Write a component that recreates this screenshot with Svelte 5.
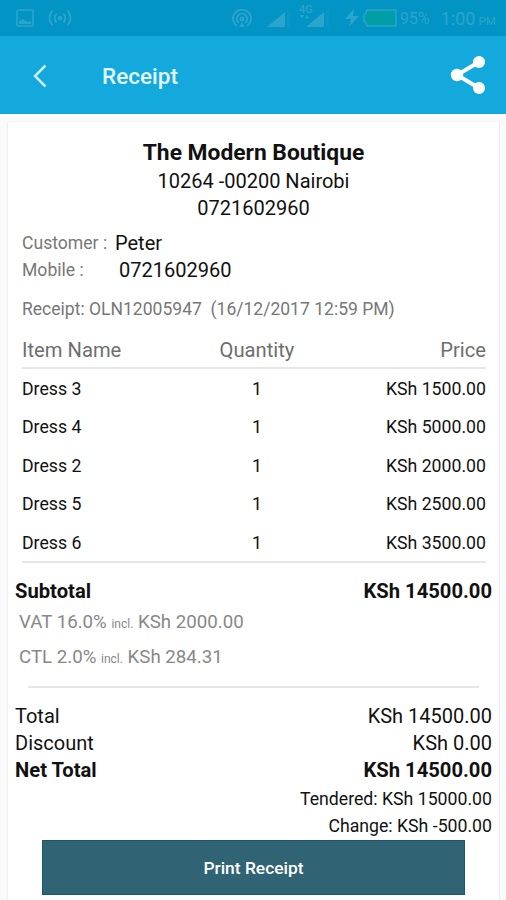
<script>
  const shop = {
    name: 'The Modern Boutique',
    address: '10264 -00200 Nairobi',
    phone: '0721602960'
  };

  const customer = { name: 'Peter', mobile: '0721602960' };

  const items = [
    { name: 'Dress 3', quantity: 1, price: 1500 },
    { name: 'Dress 4', quantity: 1, price: 5000 },
    { name: 'Dress 2', quantity: 1, price: 2000 },
    { name: 'Dress 5', quantity: 1, price: 2500 },
    { name: 'Dress 6', quantity: 1, price: 3500 }
  ];

  const taxes = [
    { label: 'VAT 16.0%', amount: 2000 },
    { label: 'CTL 2.0%', amount: 284.31 }
  ];

  const discount = 0;
  const tendered = 15000;
  const change = -500;
  const total = items.reduce((sum, item) => sum + item.quantity * item.price, 0);

  const money = (value) => `KSh ${value.toFixed(2)}`;
</script>

<div class="screen">
  <div class="status">
    <svg class="picture" width="18" height="18" viewBox="0 0 18 18">
      <rect x="1" y="1" width="16" height="16" rx="1" fill="none" stroke="currentColor" stroke-width="1.6" />
      <path d="M3 15v-3l4-2 4 3 4-1v3z" fill="currentColor" />
    </svg>
    <svg class="hotspot" width="24" height="18" viewBox="0 0 24 18" fill="none" stroke="currentColor" stroke-width="1.9">
      <circle cx="12" cy="9" r="2.2" fill="currentColor" stroke="none" />
      <path d="M8.500 4.500q-3.500 4.500 0 9M15.500 4.500q3.500 4.500 0 9M4.500 1.500q-6 7.500 0 15M19.500 1.500q6 7.500 0 15" />
    </svg>
    <svg class="cast" width="20" height="19" viewBox="0 0 20 19" fill="none" stroke="currentColor" stroke-width="1.800">
      <path d="M5 17a9 9 0 1 1 10 0M7 14a5.200 5.200 0 1 1 6 0" />
      <circle cx="10" cy="10" r="1.500" />
      <path d="M7.500 18l2.500-5 2.500 5z" fill="currentColor" stroke="none" />
    </svg>
    <svg class="signal" width="24" height="17" viewBox="0 0 24 17">
      <path d="M0 17L18 2v15z" fill="currentColor" />
      <path d="M20 0h3v17h-3z" fill="currentColor" opacity=".2" />
    </svg>
    <div class="mobile-data">
      <span class="network">4G</span>
      <svg width="32" height="17" viewBox="0 0 32 17">
        <path d="M1 5h4l-2 3.500zM6 8.500h4L8 5zM7 17L25 2v15z" fill="currentColor" />
        <path d="M27 0h3v17h-3z" fill="currentColor" opacity=".2" />
      </svg>
    </div>
    <svg class="bolt" width="14" height="18" viewBox="0 0 14 18">
      <path d="M9 0L0 10h6l-2 8L14 7H8z" fill="currentColor" />
    </svg>
    <svg class="battery" width="34" height="18" viewBox="0 0 34 18">
      <path d="M4 1h29v16H4l-1.500-4-1.500-1V6l1.500-1z" fill="#009fa8" stroke="currentColor" stroke-width="1.500" />
    </svg>
    <span class="percent">95%</span>
    <span class="clock">1:00<small>PM</small></span>
  </div>

  <header>
    <svg class="back" width="14" height="24" viewBox="0 0 14 24">
      <path d="M12.500 1.500L2 12l10.500 10.500" fill="none" stroke="currentColor" stroke-width="2.500" />
    </svg>
    <h1>Receipt</h1>
    <svg class="share" width="36" height="40" viewBox="0 0 36 40">
      <path d="M29 7L7 20l22 13" fill="none" stroke="currentColor" stroke-width="4" />
      <g fill="currentColor">
        <circle cx="29" cy="7" r="6" />
        <circle cx="7" cy="20" r="6.200" />
        <circle cx="29" cy="33" r="6" />
      </g>
    </svg>
  </header>

  <main>
    <div class="shop">
      <h2>{shop.name}</h2>
      <p>{shop.address}</p>
      <p>{shop.phone}</p>
    </div>

    <div class="customer">
      <p><span class="label">Customer :</span><span>{customer.name}</span></p>
      <p><span class="label mobile">Mobile :</span><span>{customer.mobile}</span></p>
    </div>

    <p class="number">Receipt: OLN12005947 &nbsp;(16/12/2017 12:59 PM)</p>

    <div class="items">
      <div class="row head">
        <span>Item Name</span>
        <span>Quantity</span>
        <span>Price</span>
      </div>
      {#each items as item}
        <div class="row">
          <span>{item.name}</span>
          <span>{item.quantity}</span>
          <span>{money(item.price)}</span>
        </div>
      {/each}
    </div>

    <div class="line bold subtotal">
      <span>Subtotal</span>
      <span>{money(total)}</span>
    </div>

    <div class="taxes">
      {#each taxes as tax}
        <p>{tax.label} <small>incl.</small> {money(tax.amount)}</p>
      {/each}
    </div>

    <div class="totals">
      <div class="line"><span>Total</span><span>{money(total)}</span></div>
      <div class="line"><span>Discount</span><span>{money(discount)}</span></div>
      <div class="line bold"><span>Net Total</span><span>{money(total - discount)}</span></div>
      <div class="paid">
        <p>Tendered: {money(tendered)}</p>
        <p>Change: {money(change)}</p>
      </div>
    </div>

    <button>Print Receipt</button>
  </main>
</div>

<style>
  :global(body) {
    background: #fafafa;
  }

  .screen {
    height: 900px;
    display: flex;
    flex-direction: column;
    overflow: hidden;
    background: #fafafa;
    font-family: Roboto, sans-serif;
    font-size: 20px;
    color: #111;
  }

  h1, h2, p {
    margin: 0;
  }

  svg {
    display: block;
    flex-shrink: 0;
  }

  .status {
    height: 36px;
    flex-shrink: 0;
    box-sizing: border-box;
    display: flex;
    align-items: center;
    padding-left: 16px;
    background: #0294c4;
    color: #2ba5ce;
    white-space: nowrap;
  }

  .hotspot {
    margin-left: 14px;
  }

  .cast {
    margin-left: 160px;
  }

  .signal {
    margin-left: 15px;
  }

  .mobile-data {
    position: relative;
    margin-left: 8px;
  }

  .network {
    position: absolute;
    top: -5px;
    left: 0;
    font-size: 11px;
    line-height: 10px;
    font-weight: 500;
  }

  .bolt {
    margin-left: 14px;
  }

  .battery {
    margin-left: 4px;
  }

  .percent {
    margin-left: 3px;
    font-size: 16px;
  }

  .clock {
    margin-left: 11px;
    font-size: 18px;
  }

  .clock small {
    margin-left: 3px;
    font-size: 11.500px;
  }

  header {
    height: 78px;
    flex-shrink: 0;
    box-sizing: border-box;
    display: flex;
    align-items: center;
    padding: 0 20px 0 33px;
    background: #14a9dc;
    color: #fff;
  }

  .back {
    margin-top: 1px;
    color: #c5edfa;
  }

  h1 {
    flex: 1;
    margin: 2px 0 0 55px;
    font-size: 22.500px;
    font-weight: 500;
    color: #e2f7ff;
  }

  main {
    flex: 1;
    display: flex;
    flex-direction: column;
    margin: 7px 6px 0 7px;
    padding: 15px 7px 0;
    background: #fff;
    border: 1px solid #eee;
    border-top-color: #f4f4f4;
    border-bottom: 0;
  }

  .shop {
    text-align: center;
    line-height: 27px;
  }

  .shop h2 {
    font-size: 22.800px;
    font-weight: 700;
    line-height: 31px;
  }

  .customer {
    margin-top: 8px;
    padding-left: 7px;
    line-height: 27px;
  }

  .customer p {
    display: flex;
  }

  .label {
    width: 93px;
    font-size: 17.600px;
    color: #777;
  }

  .mobile {
    width: 97px;
  }

  .number {
    margin-top: 12px;
    padding-left: 7px;
    font-size: 17.540px;
    line-height: 27px;
    color: #777;
  }

  .items {
    margin: 9px 6px 0 7px;
    border-bottom: 2px solid #e6e6e6;
  }

  .row {
    display: grid;
    grid-template-columns: 157px 156px 1fr;
    padding-top: 3px;
    font-size: 17.700px;
    line-height: 35.400px;
  }

  .row span:nth-child(2) {
    text-align: center;
  }

  .row span:last-child {
    text-align: right;
  }

  .head {
    padding: 1px 0 0;
    font-size: 20.200px;
    line-height: 34px;
    color: #6e6e6e;
    border-bottom: 2px solid #e6e6e6;
  }

  .line {
    display: flex;
    justify-content: space-between;
    line-height: 27px;
  }

  .bold {
    font-size: 20.200px;
    font-weight: 700;
  }

  .subtotal {
    margin-top: 15px;
  }

  .taxes {
    margin: 0 13px;
    padding-bottom: 11px;
    border-bottom: 2px solid #e6e6e6;
    font-size: 18.700px;
    line-height: 35px;
    color: #888;
  }

  .taxes p {
    margin-left: -9px;
  }

  .taxes small {
    font-size: 12px;
    line-height: 1;
  }

  .totals {
    margin-top: 15px;
  }

  .paid {
    padding-top: 2px;
    font-size: 17.700px;
    line-height: 27px;
    text-align: right;
  }

  button {
    height: 55px;
    flex-shrink: 0;
    margin: 0 27px;
    border: 1px solid #1d5569;
    background: #306374;
    color: #fff;
    font-family: inherit;
    font-size: 17.400px;
    font-weight: 500;
  }
</style>
